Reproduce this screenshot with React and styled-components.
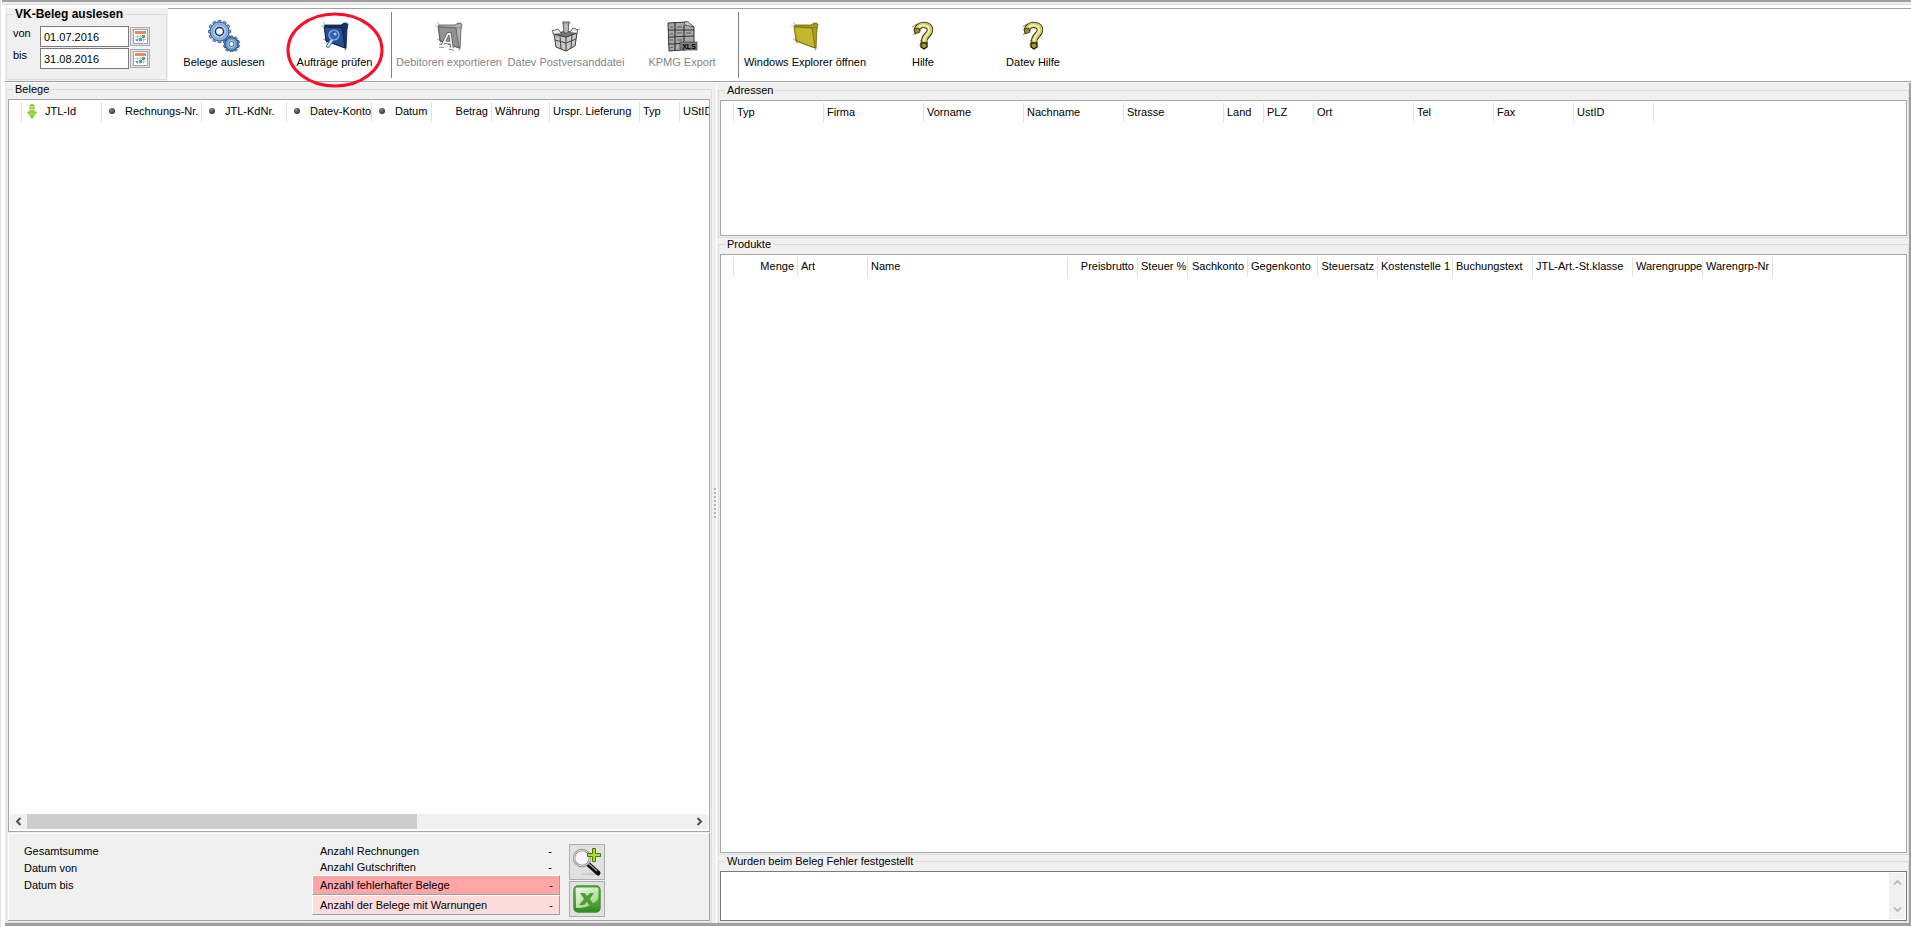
import React, { useState } from 'react';
import styled, { createGlobalStyle, css } from 'styled-components';

const belegColumns = [
    { label: '', width: 13 },
    { label: 'JTL-Id', width: 80, icon: 'arrow' },
    { label: 'Rechnungs-Nr.', width: 100, icon: 'dot' },
    { label: 'JTL-KdNr.', width: 85, icon: 'dot' },
    { label: 'Datev-Konto', width: 85, icon: 'dot' },
    { label: 'Datum', width: 60, icon: 'dot' },
    { label: 'Betrag', width: 60, right: true },
    { label: 'Währung', width: 58 },
    { label: 'Urspr. Lieferung', width: 90 },
    { label: 'Typ', width: 40 },
    { label: 'UStID', width: 60 },
];

const adressColumns = [
    { label: '', width: 13 },
    { label: 'Typ', width: 90 },
    { label: 'Firma', width: 100 },
    { label: 'Vorname', width: 100 },
    { label: 'Nachname', width: 100 },
    { label: 'Strasse', width: 100 },
    { label: 'Land', width: 40 },
    { label: 'PLZ', width: 50 },
    { label: 'Ort', width: 100 },
    { label: 'Tel', width: 80 },
    { label: 'Fax', width: 80 },
    { label: 'UstID', width: 80 },
];

const produktColumns = [
    { label: '', width: 13 },
    { label: 'Menge', width: 64, right: true },
    { label: 'Art', width: 70 },
    { label: 'Name', width: 200 },
    { label: 'Preisbrutto', width: 70, right: true },
    { label: 'Steuer %', width: 50, right: true },
    { label: 'Sachkonto', width: 60, right: true },
    { label: 'Gegenkonto', width: 70 },
    { label: 'Steuersatz', width: 60, right: true },
    { label: 'Kostenstelle 1', width: 75 },
    { label: 'Buchungstext', width: 80 },
    { label: 'JTL-Art.-St.klasse', width: 100 },
    { label: 'Warengruppe', width: 70 },
    { label: 'Warengrp-Nr', width: 70 },
];

const teeth = (count, r) =>
    Array.from({ length: count }, (_, i) => (
        <rect key={i} x="-1.5" y={-r} width="3" height="4" rx="0.6" transform={`rotate(${(i * 360) / count})`} />
    ));

const GearsIcon = () => (
    <svg width="32" height="32" viewBox="0 0 32 32" aria-hidden="true">
        <g transform="translate(11.5 11.5)" stroke="#2c4d78" strokeWidth="0.8" fill="#8db8e4">
            {teeth(12, 11.2)}
            <circle r="9.4" />
            <circle r="7" fill="#a9cbec" stroke="#6f9bcb" />
            <circle r="4" fill="#fff" stroke="#1f3350" strokeWidth="1.4" />
        </g>
        <g transform="translate(23.5 24)" stroke="#24426b" strokeWidth="0.8" fill="#6f9fd2">
            {teeth(10, 8)}
            <circle r="6.4" />
            <circle r="4.5" fill="#a9cbec" stroke="#5a87ba" />
            <circle r="2.5" fill="#fff" stroke="#1f3350" />
        </g>
    </svg>
);

// the folder is shared by three buttons, only colours and the overlay change
const FolderIcon = ({ fill, back, line, children }) => (
    <svg width="32" height="32" viewBox="0 0 32 32" aria-hidden="true">
        <path d="M6 5 L22 5 L25 3 L29 4 L28 9 L27 28 L7 21 Z" fill={back} stroke={line} strokeWidth="0.8" />
        <path d="M5 7 L23 8 L26 28 L7 21 Z" fill={fill} stroke={line} strokeWidth="0.7" />
        <path d="M2 6 L29 8 M5 2 L8 24 M4 19 L28 29 M24 5 L28 2 M27 25 L26 31" fill="none" stroke={line} strokeWidth="0.6" opacity="0.7" />
        {children}
    </svg>
);

const PruefenIcon = () => (
    <FolderIcon fill="#264f98" back="#17346b" line="#0c1e42">
        <path d="M13 20 L9 26" stroke="#4a6ba4" strokeWidth="4" strokeLinecap="round" />
        <path d="M13 20 L9 26" stroke="#d6e4f8" strokeWidth="2.2" strokeLinecap="round" />
        <circle cx="15" cy="15" r="5" fill="#2f62b4" stroke="#8fb4e8" strokeWidth="1.2" />
        <circle cx="16" cy="14" r="1.5" fill="#a9c6ee" />
    </FolderIcon>
);

const DebitorenIcon = () => (
    <FolderIcon fill="#929292" back="#b5b5b5" line="#555">
        <path d="M9 26 L15 14 L17 14 L19 28 M11 22 L18 23 M6 26 L11 26 M16 28 L21 29" fill="none" stroke="#444" strokeWidth="3" />
        <path d="M9 26 L15 14 L17 14 L19 28 M11 22 L18 23 M6 26 L11 26 M16 28 L21 29" fill="none" stroke="#ececec" strokeWidth="1.8" />
    </FolderIcon>
);

const BoxIcon = () => (
    <svg width="32" height="32" viewBox="0 0 32 32" aria-hidden="true">
        <path d="M4 14 L16 17 L27 13 L25 26 L16 31 L6 27 Z" fill="#c9c9c9" stroke="#3c3c3c" />
        <path d="M4 14 L16 11 L27 13 L16 17 Z" fill="#777" stroke="#444" />
        <path d="M16 17 L16 31 M5 20 L16 23 L26 19 M10 16 L11 29 M22 15 L21 28" fill="none" stroke="#444" />
        <path d="M4 14 L2 11 L8 9 L11 13 M27 13 L28 10 L23 8 L20 12" fill="#eee" stroke="#555" strokeWidth="0.9" />
        <path d="M13 2 L19 2 L18 13 L14 13 Z" fill="#bbb" stroke="#555" strokeWidth="0.9" />
        <path d="M12 3 L21 3 M13 1 L14 6 M19 1 L18 6 M2 13 L8 17 M26 10 L30 9" stroke="#666" strokeWidth="0.6" />
    </svg>
);

const SheetIcon = () => (
    <svg width="32" height="32" viewBox="0 0 32 32" aria-hidden="true">
        <path d="M2 3 L21 2 L28 7 L28 29 L3 31 Z" fill="#a9a9a9" stroke="#333" />
        <path d="M18 2 L19 5 L28 7 L22 2 Z" fill="#d5d5d5" stroke="#444" strokeWidth="0.8" />
        <path d="M2 10 L28 10 M2 17 L28 16 M2 24 L28 23 M9 3 L9 31 M18 5 L18 31" stroke="#333" strokeWidth="1.2" />
        <path d="M4 7 L7 7 M11 7 L16 7 M4 14 L7 14 M11 13 L16 13 M20 13 L25 13 M4 20 L7 20 M4 28 L7 27 M11 20 L16 20" stroke="#444" strokeWidth="0.8" />
        <rect x="14" y="22" width="17" height="8" fill="#7d7d7d" stroke="#444" strokeWidth="0.7" />
        <text x="23" y="29" fontSize="7" fontWeight="bold" textAnchor="middle" fill="#000">XLS</text>
    </svg>
);

const ExplorerIcon = () => <FolderIcon fill="#c4b82a" back="#a79c1c" line="#6e6712" />;

const HelpIcon = () => (
    <svg width="32" height="32" viewBox="0 0 32 32" aria-hidden="true">
        <path d="M10 11 C10 3 23 3 23 10 C23 15 17 15 17 22" fill="none" stroke="#29260c" strokeWidth="6.400" />
        <path d="M10 11 C10 3 23 3 23 10 C23 15 17 15 17 22" fill="none" stroke="#d3c95c" strokeWidth="4.800" />
        <path d="M11 8 C14 4 23 4 22 11 C21 15 17 15 17 21" fill="none" stroke="#f5efb4" strokeWidth="2" />
        <path d="M7 9 L12 8 L13 12 L8 14 Z" fill="#99901f" stroke="#29260c" strokeWidth="0.8" />
        <path d="M14 23 L20 23 L20 27 L17 29 L14 27 Z" fill="#a79c22" stroke="#161404" strokeWidth="1.3" />
        <path d="M5 7 L10 4 M6 15 L9 12 M13 20 L21 26 M12 25 L21 22" stroke="#55501a" strokeWidth="0.6" />
    </svg>
);

const CalendarIcon = () => (
    <svg width="15" height="15" viewBox="0 0 15 15" aria-hidden="true">
        <rect x="0.5" y="0.5" width="14" height="14" fill="#fff" stroke="#8fa9d4" />
        <rect x="2" y="2" width="11" height="3" fill="#f08b4b" />
        <path d="M2 7.5 H13 M2 10.5 H13 M4.5 6 V13 M7.5 6 V13 M10.5 6 V13" stroke="#b9cbe6" />
        <path d="M9 6 h3 v3 h-3 z M6 9 h3 v3 h-3 z" fill="#52a877" />
        <path d="M3 10 h2 v2 h-2 z" fill="#6f9bdc" />
    </svg>
);

const SearchPlusIcon = () => (
    <svg width="30" height="30" viewBox="0 0 30 30" aria-hidden="true">
        <ellipse cx="18" cy="27" rx="9" ry="1.5" fill="#ccc" />
        <path d="M16 17 L26 26" stroke="#111" strokeWidth="5" strokeLinecap="round" />
        <path d="M16 16 L25 24" stroke="#aaa" strokeWidth="1.2" />
        <circle cx="10" cy="11" r="8" fill="#f7f7f7" stroke="#8a8a8a" strokeWidth="2.4" />
        <circle cx="10" cy="11" r="8" fill="none" stroke="#dedede" strokeWidth="1" />
        <path d="M20.500 1.500 h3 v5 h5 v3 h-5 v5 h-3 v-5 h-5 v-3 h5 z" fill="#b4dc1e" stroke="#3f7a0c" />
    </svg>
);

const ExcelIcon = () => (
    <svg width="28" height="28" viewBox="0 0 28 28" aria-hidden="true">
        <defs>
            <linearGradient id="excel" x1="0" y1="0" x2="0" y2="1">
                <stop offset="0" stopColor="#8fd672" />
                <stop offset="1" stopColor="#2d8a1a" />
            </linearGradient>
            <linearGradient id="gloss" x1="0" y1="0" x2="1" y2="1">
                <stop offset="0" stopColor="#fff" />
                <stop offset="1" stopColor="#a5dc88" />
            </linearGradient>
        </defs>
        <rect x="1" y="1" width="26" height="26" rx="4" fill="url(#excel)" stroke="#3f8a2e" strokeWidth="1.4" />
        <path d="M3 3 H25 V14 C18 22 10 23 3 23 Z" fill="url(#gloss)" opacity="0.85" />
        <path d="M7 8 H12 L14 11 L17 8 H21 L17 14 L21 20 H16 L14 17 L11 20 H6 L11 14 Z" fill="#4c9f38" />
    </svg>
);

const SortArrow = () => (
    <svg width="10" height="15" viewBox="0 0 10 15" aria-hidden="true">
        <path d="M3 1 Q5 0 7 1 V8 H9.500 L5 14.500 L0.500 8 H3 Z" fill="#9bd83a" stroke="#7fb92c" strokeWidth="0.8" />
        <path d="M3 3 H7 M3 5.500 H7" stroke="#d9e8c0" />
    </svg>
);

const Chevron = ({ d, color = '#505050' }) => (
    <svg width="9" height="9" viewBox="0 0 9 9" aria-hidden="true">
        <path d={d} fill="none" stroke={color} strokeWidth="2" />
    </svg>
);

const GlobalStyle = createGlobalStyle`
    *, *::before {
        box-sizing: border-box;
    }
    body {
        margin: 0;
        background: #fff;
        color: #000;
        font: 11px/13px "Liberation Sans", Arial, sans-serif;
    }
    button, input, textarea {
        font: inherit;
        color: inherit;
    }
`;

const Window = styled.div`
    display: flex;
    flex-direction: column;
    height: 100vh;
    min-height: 480px;
    padding: 0 0 1px 1px;
    overflow: hidden;
    border-left: 1px solid #e3e3e3;
    &::before {
        content: '';
        height: 5px;
        flex: none;
        background: #f0f0f0;
        border-top: 2px solid #a0a0a0;
        border-bottom: 1px solid #dcdcdc;
    }
`;

const Header = styled.header`
    display: flex;
    flex: none;
    height: 77px;
    margin: 0 0 1px 3px;
    padding-top: 3px;
    border-bottom: 1px solid #a0a0a0;
`;

const Group = styled.fieldset`
    display: flex;
    flex-direction: column;
    flex: ${props => props.$grow ? '1 1 0' : 'none'};
    min-width: 0;
    min-height: 0;
    height: ${props => props.$height || 'auto'};
    margin: 0;
    padding: ${props => props.$padding || '3px 1px 1px'};
    border: 1px solid #dcdcdc;
    background: #f0f0f0;
`;

const Legend = styled.legend`
    margin-left: 5px;
    padding: 0 2px;
    ${props => props.$bold && css`
        margin-left: 0;
        font-size: 12px;
        font-weight: bold;
    `}
`;

const DateArea = styled.div`
    width: 163px;
    flex: none;
    padding: 0 1px;
    background: #f0f0f0;
`;

const DateRow = styled.div`
    display: grid;
    grid-template-columns: 27px 89px 21px;
    height: 22px;
    align-items: start;
    label {
        line-height: 15px;
    }
`;

const DateInput = styled.input`
    height: 21px;
    min-width: 0;
    padding: 0 3px;
    border: 1px solid #7a7a7a;
    background: #fff;
    border-radius: 0;
`;

const IconButton = styled.button`
    display: flex;
    align-items: center;
    justify-content: center;
    width: ${props => props.$size}px;
    height: ${props => props.$size}px;
    padding: 0;
    background: #e1e1e1;
    border: 1px solid #adadad;
`;

const DateButton = styled(IconButton)`
    width: 20px;
    height: 19px;
    margin: 1px 0 0 1px;
`;

const Toolbar = styled.nav`
    display: flex;
    flex: 1;
    min-width: 0;
    padding-top: 3px;
    border-top: 1px solid #a0a0a0;
`;

const ToolButton = styled.button`
    position: relative;
    display: flex;
    flex-direction: column;
    align-items: center;
    gap: 4px;
    flex: none;
    width: ${props => props.$width}px;
    padding: 8px 0 0;
    border: 0;
    background: none;
    white-space: nowrap;
    &:disabled {
        color: #858585;
    }
`;

const Separator = styled.span`
    flex: none;
    width: 1px;
    height: 66px;
    margin: 0 2px;
    background: #808080;
`;

// hand drawn ring around a button
const Ring = styled.svg`
    position: absolute;
    top: 0;
    left: 6px;
    overflow: visible;
`;

const Main = styled.main`
    display: grid;
    grid-template-columns: minmax(0, 707fr) 5px minmax(0, 1192fr);
    grid-template-rows: minmax(0, 1fr);
    flex: 1;
    min-height: 0;
    margin-left: 3px;
    background: #f0f0f0;
    border-right: 2px solid #a0a0a0;
    border-bottom: 3px solid #a0a0a0;
`;

const Pane = styled.section`
    display: flex;
    flex-direction: column;
    min-height: 0;
    padding: ${props => props.$padding};
`;

const Splitter = styled.div`
    display: flex;
    flex-direction: column;
    align-items: flex-end;
    justify-content: center;
    gap: 2px;
    border-right: 1px solid #fff;
    i {
        width: 2px;
        height: 2px;
        background: #b4b4b4;
    }
`;

const ListBox = styled.div`
    display: flex;
    flex-direction: column;
    flex: 1;
    min-height: 0;
    padding-top: 2px;
    overflow: hidden;
    background: #fff;
    border: 1px solid #a5a5ab;
`;

const Table = styled.table`
    width: 1px;
    table-layout: fixed;
    border-collapse: separate;
    border-spacing: 0;
`;

const HeadCell = styled.th`
    height: 20px;
    padding: 0 3px 2px;
    border-right: 1px solid #e2e2e2;
    font-weight: normal;
    text-align: ${props => props.$right ? 'right' : 'left'};
    white-space: nowrap;
    overflow: hidden;
`;

const SortLabel = styled.span`
    display: grid;
    grid-template-columns: ${props => props.$dot ? '13px' : '11px'} auto;
    align-items: center;
    justify-content: start;
    gap: 7px;
    padding-left: ${props => props.$dot ? '0' : '2px'};
`;

const Dot = styled.i`
    width: 6px;
    height: 6px;
    margin-left: 4px;
    border-radius: 50%;
    background: radial-gradient(circle at 40% 35%, #888, #333 70%);
`;

const ScrollBar = styled.div`
    display: grid;
    grid-template-columns: 17px minmax(0, 391fr) minmax(0, 274fr) 17px;
    align-items: center;
    justify-items: center;
    height: 15px;
    margin: auto 1px 2px;
    background: #f0f0f0;
`;

const Thumb = styled.span`
    width: 100%;
    height: 100%;
    background: #cdcdcd;
`;

const ArrowButton = styled.button`
    display: flex;
    padding: 0;
    border: 0;
    background: none;
`;

const Summary = styled.div`
    display: flex;
    flex: none;
    height: 88px;
    margin-top: 1px;
    padding: 10px 0 2px 16px;
    border: solid #a0a0a0;
    border-width: 0 1px 1px 0;
    box-shadow: inset 1px 1px 0 #fff;
`;

const Totals = styled.div`
    width: 288px;
    flex: none;
    line-height: 17px;
`;

const Counts = styled.div`
    width: 248px;
    flex: none;
`;

const CountRow = styled.div`
    display: flex;
    align-items: center;
    justify-content: space-between;
    height: 16px;
    padding: 0 8px;
    ${props => props.$color && css`
        height: 20px;
        padding: 0 6px 0 7px;
        background: ${props.$color};
        border: 1px solid #a0a0a0;
        border-top-color: #fff;
        border-left-color: #fff;
    `}
`;

const Actions = styled.div`
    display: flex;
    flex-direction: column;
    gap: 1px;
    margin: 1px 0 0 9px;
`;

const ErrorBox = styled.div`
    display: flex;
    flex: 1;
    min-height: 0;
    padding: 1px;
    background: #fff;
    border: 1px solid #7a7a7a;
`;

const ErrorText = styled.textarea`
    flex: 1;
    padding: 2px;
    border: 0;
    resize: none;
    overflow: hidden;
`;

const VerticalBar = styled.div`
    display: flex;
    flex-direction: column;
    align-items: center;
    justify-content: space-between;
    width: 16px;
    padding: 5px 0;
    background: #f0f0f0;
`;

const HeaderTable = ({ columns, label }) => (
    <Table aria-label={label}>
        <colgroup>
            {columns.map((col, i) => <col key={i} style={{ width: col.width }} />)}
        </colgroup>
        <thead>
            <tr>
                {columns.map((col, i) => (
                    <HeadCell key={i} scope="col" $right={col.right}>
                        {col.icon ? (
                            <SortLabel $dot={col.icon === 'dot'}>
                                {col.icon === 'dot' ? <Dot /> : <SortArrow />}
                                {col.label}
                            </SortLabel>
                        ) : col.label}
                    </HeadCell>
                ))}
            </tr>
        </thead>
        <tbody />
    </Table>
);

const DateField = ({ id, label, value, onChange }) => (
    <DateRow>
        <label htmlFor={id}>{label}</label>
        <DateInput id={id} value={value} onChange={e => onChange(e.target.value)} />
        <DateButton type="button" aria-label={`Kalender ${label}`}><CalendarIcon /></DateButton>
    </DateRow>
);

export default function App() {
    const [von, setVon] = useState('01.07.2016');
    const [bis, setBis] = useState('31.08.2016');
    const [fehler, setFehler] = useState('');

    return (
        <>
            <GlobalStyle />
            <Window>
                <Header>
                    <DateArea>
                        <Group $height="72px" $padding="5px 6px 0">
                            <Legend $bold>VK-Beleg auslesen</Legend>
                            <DateField id="von" label="von" value={von} onChange={setVon} />
                            <DateField id="bis" label="bis" value={bis} onChange={setBis} />
                        </Group>
                    </DateArea>
                    <Toolbar>
                        <ToolButton type="button" $width={112}><GearsIcon />Belege auslesen</ToolButton>
                        <ToolButton type="button" $width={109}>
                            <PruefenIcon />
                            Aufträge prüfen
                            <Ring width="96" height="76" viewBox="0 0 96 76" aria-hidden="true">
                                <ellipse cx="49" cy="38" rx="47" ry="36" fill="none" stroke="#ff0c28" strokeWidth="3" />
                            </Ring>
                        </ToolButton>
                        <Separator />
                        <ToolButton type="button" disabled $width={110}><DebitorenIcon />Debitoren exportieren</ToolButton>
                        <ToolButton type="button" disabled $width={124}><BoxIcon />Datev Postversanddatei</ToolButton>
                        <ToolButton type="button" disabled $width={108}><SheetIcon />KPMG Export</ToolButton>
                        <Separator />
                        <ToolButton type="button" $width={128}><ExplorerIcon />Windows Explorer öffnen</ToolButton>
                        <ToolButton type="button" $width={108}><HelpIcon />Hilfe</ToolButton>
                        <ToolButton type="button" $width={112}><HelpIcon />Datev Hilfe</ToolButton>
                    </Toolbar>
                </Header>
                <Main>
                    <Pane $padding="0 0 0 1px">
                        <Group $grow>
                            <Legend>Belege</Legend>
                            <ListBox>
                                <HeaderTable columns={belegColumns} label="Belege" />
                                <ScrollBar>
                                    <ArrowButton type="button" aria-label="Nach links">
                                        <Chevron d="M6.500 1 L3 4.500 L6.500 8" />
                                    </ArrowButton>
                                    <Thumb />
                                    <span />
                                    <ArrowButton type="button" aria-label="Nach rechts">
                                        <Chevron d="M2.500 1 L6 4.500 L2.500 8" />
                                    </ArrowButton>
                                </ScrollBar>
                            </ListBox>
                            <Summary>
                                <Totals>
                                    <div>Gesamtsumme</div>
                                    <div>Datum von</div>
                                    <div>Datum bis</div>
                                </Totals>
                                <Counts>
                                    <CountRow><span>Anzahl Rechnungen</span><span>-</span></CountRow>
                                    <CountRow><span>Anzahl Gutschriften</span><span>-</span></CountRow>
                                    <CountRow $color="#ffa5a5"><span>Anzahl fehlerhafter Belege</span><span>-</span></CountRow>
                                    <CountRow $color="#ffdcdc"><span>Anzahl der Belege mit Warnungen</span><span>-</span></CountRow>
                                </Counts>
                                <Actions>
                                    <IconButton type="button" $size={36} aria-label="Beleg suchen"><SearchPlusIcon /></IconButton>
                                    <IconButton type="button" $size={36} aria-label="Excel Export"><ExcelIcon /></IconButton>
                                </Actions>
                            </Summary>
                        </Group>
                    </Pane>
                    <Splitter>
                        {Array.from({ length: 8 }, (_, i) => <i key={i} />)}
                    </Splitter>
                    <Pane $padding="1px 0 0 1px">
                        <Group $height="154px">
                            <Legend>Adressen</Legend>
                            <ListBox><HeaderTable columns={adressColumns} label="Adressen" /></ListBox>
                        </Group>
                        <Group $grow>
                            <Legend>Produkte</Legend>
                            <ListBox><HeaderTable columns={produktColumns} label="Produkte" /></ListBox>
                        </Group>
                        <Group $height="68px">
                            <Legend><label htmlFor="fehler">Wurden beim Beleg Fehler festgestellt</label></Legend>
                            <ErrorBox>
                                <ErrorText id="fehler" value={fehler} onChange={e => setFehler(e.target.value)} />
                                <VerticalBar>
                                    <ArrowButton type="button" aria-label="Nach oben">
                                        <Chevron d="M1 6.500 L4.500 3 L8 6.500" color="#bfbfbf" />
                                    </ArrowButton>
                                    <ArrowButton type="button" aria-label="Nach unten">
                                        <Chevron d="M1 2.500 L4.500 6 L8 2.500" color="#bfbfbf" />
                                    </ArrowButton>
                                </VerticalBar>
                            </ErrorBox>
                        </Group>
                    </Pane>
                </Main>
            </Window>
        </>
    );
}
